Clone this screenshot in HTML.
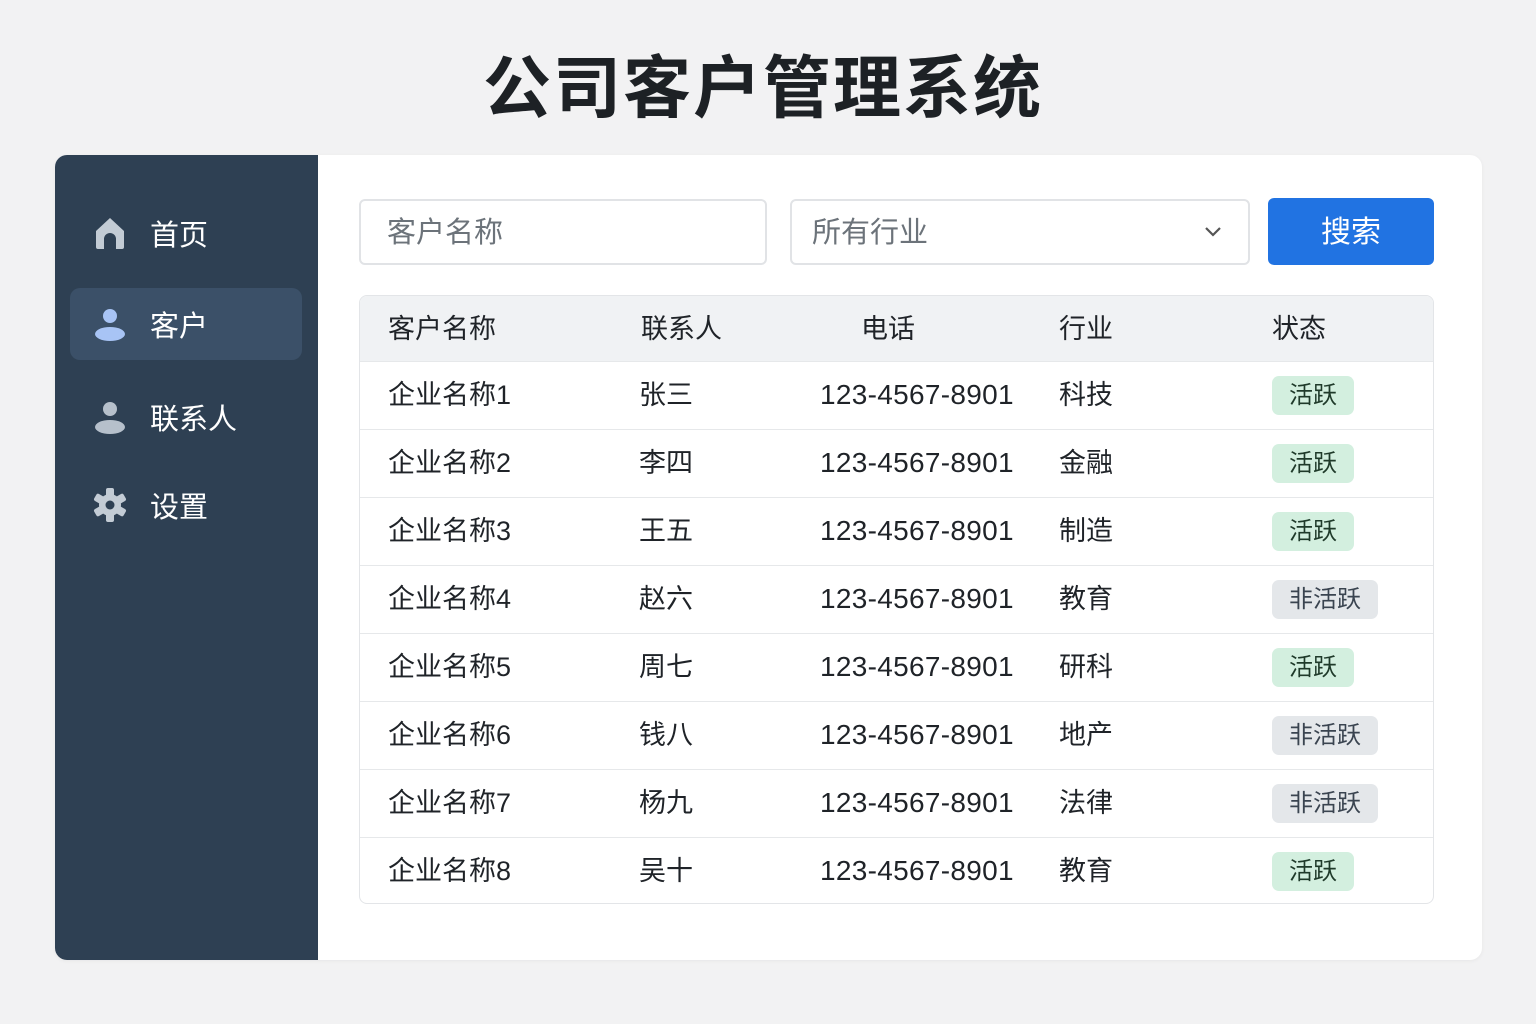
<!DOCTYPE html>
<html><head><meta charset="utf-8"><style>
*{margin:0;padding:0;box-sizing:border-box}
body{width:1536px;height:1024px;background:#f2f2f3;font-family:"Liberation Sans","Noto Sans CJK SC",sans-serif;position:relative;overflow:hidden;color:#1f2328}
h1{position:absolute;top:33px;left:0;width:1536px;text-align:center;font-size:68px;font-weight:700;letter-spacing:2px;color:#1d2125;padding-right:10px}
.card{position:absolute;left:55px;top:155px;width:1427px;height:805px;background:#fff;border-radius:12px;overflow:hidden;box-shadow:0 1px 4px rgba(0,0,0,.05)}
.side{position:absolute;left:0;top:0;width:263px;height:805px;background:#2e4053}
.item{position:absolute;left:15px;width:232px;height:72px;border-radius:10px;color:#fff;font-size:29px;display:flex;align-items:center}
.item.act{background:#3b5068}
.item svg{position:absolute;left:22px}
.item span{position:absolute;left:80px}
.inp{position:absolute;top:44px;height:66px;border:2px solid #e1e3e6;border-radius:6px;font-size:29px;color:#6c737a;padding-left:26px;line-height:64px}
.btn{position:absolute;left:1213px;top:43px;width:166px;height:67px;background:#2173e2;border-radius:6px;color:#fff;font-size:30px;text-align:center;line-height:70px}
.tbl{position:absolute;left:304px;top:140px;width:1075px;height:609px;border:1.5px solid #e3e5e8;border-radius:8px;overflow:hidden}
.row{position:absolute;left:0;width:1075px;height:68px;border-top:1.5px solid #e6e8ea;font-size:27px}
.row div{position:absolute;top:0;line-height:66px}
.row .p{font-size:28px;letter-spacing:0.3px}
.hd{top:0;height:65px;background:#f0f2f4;border:none}
.b{top:14px!important;height:39px;line-height:39px!important;border-radius:7px;font-size:24px;padding:0 17px;color:#1f3a2a}
.g{background:#d3efdf}.n{background:#e4e7ea;color:#3a4450}
</style></head><body>
<h1>公司客户管理系统</h1>
<div class="card">
<div class="side">
<div class="item" style="top:42px"><svg width="36" height="36" viewBox="0 0 36 36"><path d="M4 16 L18 3 L32 16 V32 a2 2 0 0 1-2 2 H24 V24 a6 6 0 0 0-12 0 V34 H6 a2 2 0 0 1-2-2Z" fill="#c3ccd5"/></svg><span>首页</span></div>
<div class="item act" style="top:133px"><svg width="36" height="36" viewBox="0 0 36 36"><circle cx="18" cy="10" r="7" fill="#a8c4f5"/><ellipse cx="18" cy="28" rx="15" ry="7" fill="#a8c4f5"/></svg><span>客户</span></div>
<div class="item" style="top:226px"><svg width="36" height="36" viewBox="0 0 36 36"><circle cx="18" cy="10" r="7" fill="#b6c0cb"/><ellipse cx="18" cy="28" rx="15" ry="7" fill="#b6c0cb"/></svg><span>联系人</span></div>
<div class="item" style="top:314px"><svg width="36" height="36" viewBox="0 0 36 36"><g fill="#c3ccd5"><circle cx="18" cy="18" r="11"/><rect x="14" y="1" width="8" height="34" rx="2"/><rect x="14" y="1" width="8" height="34" rx="2" transform="rotate(60 18 18)"/><rect x="14" y="1" width="8" height="34" rx="2" transform="rotate(120 18 18)"/></g><circle cx="18" cy="18" r="4.5" fill="#2e4053"/></svg><span>设置</span></div>
</div>
<div class="inp" style="left:304px;width:408px">客户名称</div>
<div class="inp" style="left:735px;width:460px;padding-left:20px">所有行业<svg style="position:absolute;right:26px;top:25px" width="18" height="12" viewBox="0 0 18 12"><path d="M2 2 L9 9 L16 2" stroke="#555" stroke-width="2.2" fill="none"/></svg></div>
<div class="btn">搜索</div>
<div class="tbl">
<div class="row hd" style="font-size:27px"><div style="left:28px">客户名称</div><div style="left:281px">联系人</div><div style="left:501px">电话</div><div style="left:699px">行业</div><div style="left:912px">状态</div></div>
<div class="row" style="top:65px"><div style="left:28px">企业名称1</div><div style="left:279px">张三</div><div class="p" style="left:460px">123-4567-8901</div><div style="left:699px">科技</div><div class="b g" style="left:912px">活跃</div></div>
<div class="row" style="top:133px"><div style="left:28px">企业名称2</div><div style="left:279px">李四</div><div class="p" style="left:460px">123-4567-8901</div><div style="left:699px">金融</div><div class="b g" style="left:912px">活跃</div></div>
<div class="row" style="top:201px"><div style="left:28px">企业名称3</div><div style="left:279px">王五</div><div class="p" style="left:460px">123-4567-8901</div><div style="left:699px">制造</div><div class="b g" style="left:912px">活跃</div></div>
<div class="row" style="top:269px"><div style="left:28px">企业名称4</div><div style="left:279px">赵六</div><div class="p" style="left:460px">123-4567-8901</div><div style="left:699px">教育</div><div class="b n" style="left:912px">非活跃</div></div>
<div class="row" style="top:337px"><div style="left:28px">企业名称5</div><div style="left:279px">周七</div><div class="p" style="left:460px">123-4567-8901</div><div style="left:699px">研科</div><div class="b g" style="left:912px">活跃</div></div>
<div class="row" style="top:405px"><div style="left:28px">企业名称6</div><div style="left:279px">钱八</div><div class="p" style="left:460px">123-4567-8901</div><div style="left:699px">地产</div><div class="b n" style="left:912px">非活跃</div></div>
<div class="row" style="top:473px"><div style="left:28px">企业名称7</div><div style="left:279px">杨九</div><div class="p" style="left:460px">123-4567-8901</div><div style="left:699px">法律</div><div class="b n" style="left:912px">非活跃</div></div>
<div class="row" style="top:541px"><div style="left:28px">企业名称8</div><div style="left:279px">吴十</div><div class="p" style="left:460px">123-4567-8901</div><div style="left:699px">教育</div><div class="b g" style="left:912px">活跃</div></div>
</div>
</div>
</body></html>
